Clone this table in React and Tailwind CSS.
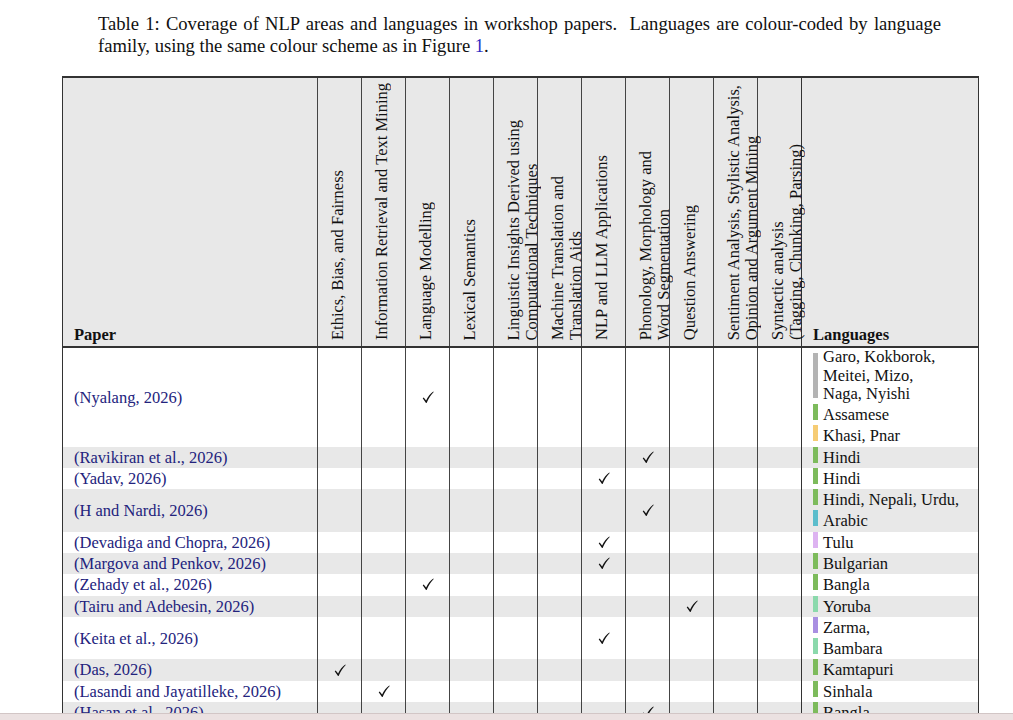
import React from "react";

const HEADERS = [
  ["Ethics, Bias, and Fairness"],
  ["Information Retrieval and Text Mining"],
  ["Language Modelling"],
  ["Lexical Semantics"],
  ["Linguistic Insights Derived using", "Computational Techniques"],
  ["Machine Translation and", "Translation Aids"],
  ["NLP and LLM Applications"],
  ["Phonology, Morphology and", "Word Segmentation"],
  ["Question Answering"],
  ["Sentiment Analysis, Stylistic Analysis,", "Opinion and Argument Mining"],
  ["Syntactic analysis", "(Tagging, Chunking, Parsing)"],
];

const C = {
  gray: "bg-[#b4b4b4]",
  green: "bg-[#7dbb5c]",
  yellow: "bg-[#f6cc74]",
  cyan: "bg-[#5cbdcc]",
  lilac: "bg-[#ddb3f1]",
  mint: "bg-[#8bd9ac]",
  purple: "bg-[#a98fe2]",
};

const ROWS = [
  {
    p: "Nyalang, 2026",
    c: 2,
    l: [
      { t: ["Garo, Kokborok,", "Meitei, Mizo,", "Naga, Nyishi"], c: C.gray },
      { t: ["Assamese"], c: C.green },
      { t: ["Khasi, Pnar"], c: C.yellow },
    ],
  },
  { p: "Ravikiran et al., 2026", c: 7, l: [{ t: ["Hindi"], c: C.green }] },
  { p: "Yadav, 2026", c: 6, l: [{ t: ["Hindi"], c: C.green }] },
  {
    p: "H and Nardi, 2026",
    c: 7,
    l: [
      { t: ["Hindi, Nepali, Urdu,"], c: C.green },
      { t: ["Arabic"], c: C.cyan },
    ],
  },
  { p: "Devadiga and Chopra, 2026", c: 6, l: [{ t: ["Tulu"], c: C.lilac }] },
  { p: "Margova and Penkov, 2026", c: 6, l: [{ t: ["Bulgarian"], c: C.green }] },
  { p: "Zehady et al., 2026", c: 2, l: [{ t: ["Bangla"], c: C.green }] },
  { p: "Tairu and Adebesin, 2026", c: 8, l: [{ t: ["Yoruba"], c: C.mint }] },
  {
    p: "Keita et al., 2026",
    c: 6,
    l: [
      { t: ["Zarma,"], c: C.purple },
      { t: ["Bambara"], c: C.mint },
    ],
  },
  { p: "Das, 2026", c: 0, l: [{ t: ["Kamtapuri"], c: C.green }] },
  { p: "Lasandi and Jayatilleke, 2026", c: 1, l: [{ t: ["Sinhala"], c: C.green }] },
  { p: "Hasan et al., 2026", c: 7, l: [{ t: ["Bangla"], c: C.green }] },
  { p: "Rahman et al., 2026", c: 6, l: [{ t: ["Bangla"], c: C.green }] },
];

function Check() {
  return (
    <svg width="12" height="13" viewBox="0 0 12 13" className="block mx-auto">
      <path
        d="M0.7 7.2 L1.7 6.5 L4.1 9.5 C5.9 5.8 8.4 2.7 11.3 0.6 L11.7 1.1 C9.1 3.7 6.5 7.7 4.6 12.1 L4.0 12.1 Z"
        fill="#111"
      />
    </svg>
  );
}

function LangEntry({ e }) {
  if (e.t.length > 1) {
    return (
      <div className="flex items-start">
        <span className={`w-[5px] h-[45px] mt-[4.4px] shrink-0 ${e.c}`} />
        <span className="ml-[5px] leading-[18.5px]">
          {e.t.map((x, i) => (
            <span key={i} className="block whitespace-nowrap">
              {x}
            </span>
          ))}
        </span>
      </div>
    );
  }
  return (
    <div className="flex items-start h-[21.3px]">
      <span className={`w-[5px] h-[16px] shrink-0 ${e.c}`} />
      <span className="ml-[5px] leading-[21.3px] whitespace-nowrap">{e.t[0]}</span>
    </div>
  );
}

export default function App() {
  return (
    <div
      className="h-[720px] w-[1013px] flex flex-col overflow-hidden bg-white text-[#111]"
      style={{ fontFamily: '"Liberation Serif", "Times New Roman", serif' }}
    >
      <div className="flex-1 min-h-0 overflow-hidden">
        <div className="pl-[98px] pt-[13px] text-[18.6px] leading-[21.7px]">
          <div className="w-[843px] text-justify [text-align-last:justify]">
            Table 1: Coverage of NLP areas and languages in workshop papers.&nbsp; Languages are colour-coded by language
          </div>
          <div className="whitespace-nowrap">
            family, using the same colour scheme as in Figure <span className="text-[#2a2ac4]">1</span>.
          </div>
        </div>

        <table className="ml-[62px] mt-[20px] w-[916px] table-fixed border-collapse text-[16.5px]">
          <colgroup>
            <col className="w-[255px]" />
            {HEADERS.map((_, i) => (
              <col key={i} className="w-[44px]" />
            ))}
            <col className="w-[177px]" />
          </colgroup>
          <thead>
            <tr className="bg-[#e8e8e8] border-t-2 border-b-2 border-[#333]">
              <th className="h-[270px] p-0 pl-[11px] pb-[2px] align-bottom text-left font-bold leading-[18px] border-l border-[#333]">
                Paper
              </th>
              {HEADERS.map((h, i) => (
                <th key={i} className="h-[270px] p-0 align-bottom text-left font-normal border-l border-[#444]">
                  <div className="pl-[11px] pb-[6px]">
                    <div className="[writing-mode:vertical-rl] rotate-180 whitespace-nowrap leading-[18px] text-left">
                      {h.map((x, j) => (
                        <span key={j} className="block">
                          {x}
                        </span>
                      ))}
                    </div>
                  </div>
                </th>
              ))}
              <th className="h-[270px] p-0 pl-[11px] pb-[2px] align-bottom text-left font-bold leading-[18px] border-x border-[#333]">
                Languages
              </th>
            </tr>
          </thead>
          <tbody>
            {ROWS.map((r, ri) => (
              <tr key={ri} className={ri % 2 === 1 ? "bg-[#e8e8e8]" : "bg-white"}>
                <td className="p-0 pl-[11px] align-middle leading-[21.3px] whitespace-nowrap text-[#23237d] border-l border-[#333]">
                  ({r.p})
                </td>
                {HEADERS.map((_, ci) => (
                  <td key={ci} className="p-0 align-middle border-l border-[#444]">
                    {r.c === ci ? <Check /> : null}
                  </td>
                ))}
                <td className="p-0 pl-[11px] align-top border-x border-[#333]">
                  {r.l.map((e, ei) => (
                    <LangEntry key={ei} e={e} />
                  ))}
                </td>
              </tr>
            ))}
          </tbody>
        </table>
      </div>
      <div className="h-[7px] shrink-0 bg-[#ebe1e1] border-t border-[#d2c6c6]" />
    </div>
  );
}
